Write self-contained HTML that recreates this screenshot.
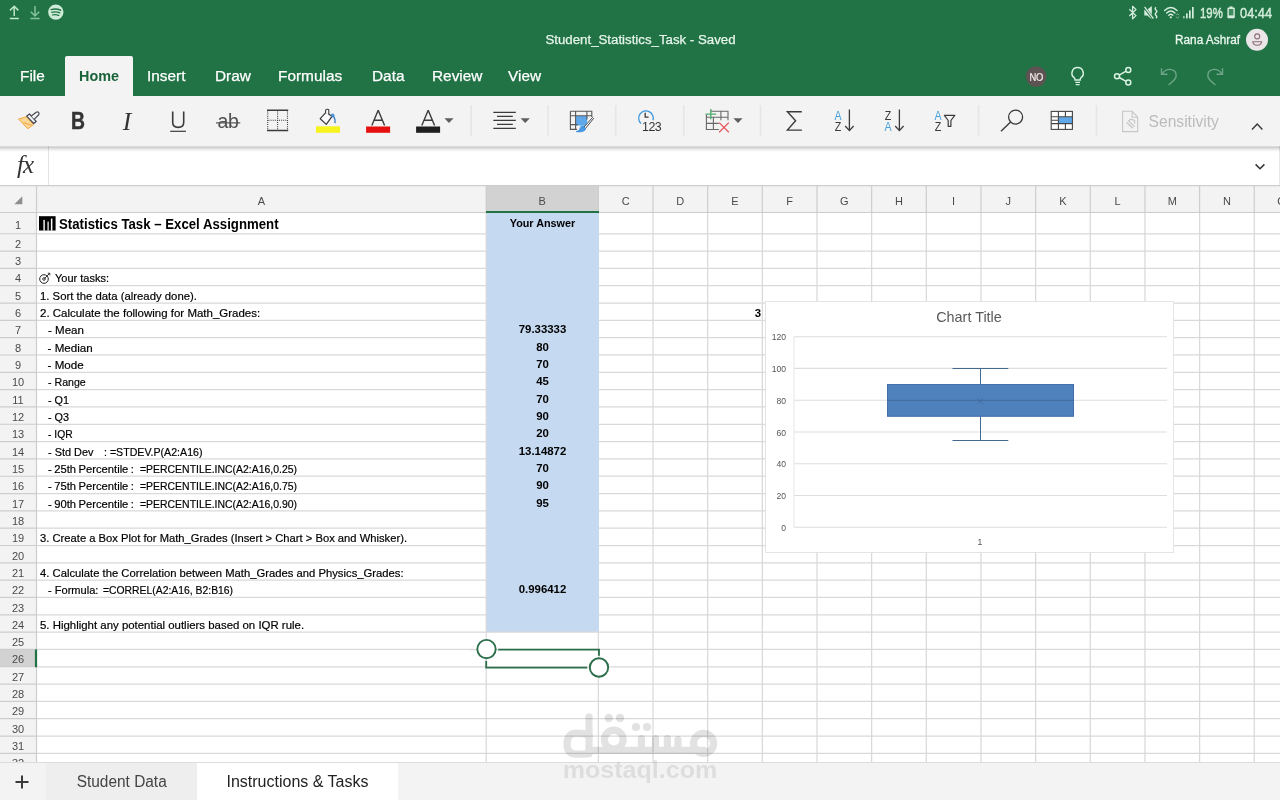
<!DOCTYPE html>
<html><head><meta charset="utf-8"><title>Student_Statistics_Task</title>
<style>
*{margin:0;padding:0;box-sizing:border-box}
html,body{width:1280px;height:800px;overflow:hidden;background:#fff;font-family:"Liberation Sans",sans-serif}
body{position:relative}
#root{position:absolute;left:0;top:0;width:1280px;height:800px;overflow:hidden;will-change:transform}
.abs{position:absolute}
#green{position:absolute;left:0;top:0;width:1280px;height:96px;background:#217346}
#hometab{position:absolute;left:65px;top:56px;width:68px;height:41px;background:#f3f3f3;border-radius:2px 2px 0 0}
.tab{position:absolute;top:66px;height:20px;line-height:20px;font-size:15.4px;color:#fff;white-space:nowrap;-webkit-text-stroke:.25px currentColor}
#toolbar{position:absolute;left:0;top:96px;width:1280px;height:50px;background:#f3f3f3;z-index:5}
#tbsh{position:absolute;left:0;top:145.500px;width:1280px;height:6.500px;z-index:6;background:linear-gradient(to bottom,rgba(0,0,0,0) 0,rgba(0,0,0,.23) 14%,rgba(0,0,0,.13) 40%,rgba(0,0,0,.04) 75%,rgba(0,0,0,0) 100%)}
.stx{top:3.300px;height:20px;line-height:20px;font-size:15px;color:#d3ecda;-webkit-text-stroke:.45px #d3ecda;transform-origin:0 50%;white-space:nowrap}
.tb{height:30px;line-height:30px;text-align:center;color:#333}
.az{width:10px;height:11px;line-height:11px;font-size:12.400px;color:#3b3b3b;text-align:center;transform:scaleX(.86)}
.sep{position:absolute;top:13px;width:1px;height:28px;background:#e1e1e1}
#fbar{position:absolute;left:0;top:146px;width:1280px;height:40px;background:#fff;border-bottom:1px solid #d0d0d0}
#fx{position:absolute;left:0;top:0;width:48.600px;height:39px;border-right:1.600px solid #e4e4e4;background:#fff}
#colhdrbg{position:absolute;left:0;top:186px;width:1280px;height:26.5px;background:#f3f3f3}
#rowhdrbg{position:absolute;left:0;top:186px;width:37px;height:576px;background:#f3f3f3}
#grid{position:absolute;left:0;top:0}
.ch{position:absolute;top:192.800px;height:16px;line-height:16px;text-align:center;font-size:11px;color:#4a4a4a}
.rh{position:absolute;left:0;width:36px;height:16px;line-height:16px;text-align:center;font-size:11px;color:#4a4a4a}
#bfill{position:absolute;background:#c5d9f1}
.ca{position:absolute;left:39.5px;height:16px;line-height:16px;font-size:11.6px;color:#000;white-space:nowrap;transform-origin:0 50%;transform:scaleX(.985);-webkit-text-stroke:.2px #000}
.cb{position:absolute;left:486px;width:113px;height:16px;line-height:16px;font-size:11.4px;font-weight:bold;color:#000;text-align:center;white-space:nowrap}
#r1t{left:59.300px;top:214.500px;height:18px;line-height:18px;font-size:14.400px;font-weight:bold;color:#000;white-space:nowrap;transform-origin:0 50%;transform:scaleX(.918)}
#b1t{left:486px;width:113px;top:215.200px;height:16px;line-height:16px;font-size:11.400px;font-weight:bold;text-align:center;color:#000;white-space:nowrap;transform:scaleX(.95)}
#e6t{left:740px;width:21px;top:305px;height:16px;line-height:16px;font-size:11.400px;font-weight:bold;text-align:right;color:#000}
.yl{left:756.100px;width:30px;height:12px;line-height:12px;font-size:8.600px;color:#555;text-align:right}
#bottom{position:absolute;left:0;top:762px;width:1280px;height:38px;background:#f3f3f3;border-top:1px solid #dcdcdc}
.stab{position:absolute;top:0;height:38px;line-height:37px;font-size:16px;text-align:center;color:#444}
</style></head><body><div id="root">

<div id="green"></div>
<div id="hometab"></div>
<!-- status bar left -->
<svg class="abs" style="left:0;top:0" width="80" height="26" viewBox="0 0 80 26" fill="none">
<g stroke="#bfe5cb" stroke-width="1.5"><path d="M14.2 6.2V16M10 10.4L14.2 6.2L18.4 10.4M9.8 18.6H18.8"/></g>
<g stroke="#86c29d" stroke-width="1.5"><path d="M35 6V16M30.8 11.8L35 16L39.2 11.8M30.4 18.6H39.6"/></g>
<circle cx="55.8" cy="12.1" r="7.700" fill="#cdebd6"/>
<g stroke="#217346" stroke-linecap="round"><path d="M51.2 9.6Q56 8 60.6 10.2" stroke-width="1.5"/><path d="M51.8 12.4Q56 11.1 59.8 12.9" stroke-width="1.3"/><path d="M52.4 15Q55.8 14 58.9 15.5" stroke-width="1.1"/></g>
</svg>
<!-- status bar right -->
<svg class="abs" style="left:1120px;top:0" width="160" height="26" viewBox="1120 0 160 26" fill="none">
<g stroke="#d6ecdc" stroke-width="1.3" stroke-linejoin="round"><path d="M1129.3 9.2L1136 15.6L1132.6 18.9V6.3L1136 9.6L1129.3 16"/></g>
<g fill="#d6ecdc"><path d="M1144.300 9.800H1147.200L1151.800 6V19.200L1147.200 15.400H1144.300Z"/></g>
<path d="M1144 6.500L1153 18.500" stroke="#217346" stroke-width="2.600"/><path d="M1144.600 6.800L1153.400 18.600" stroke="#d6ecdc" stroke-width="1.300"/>
<path d="M1156 7.300q-1.600 1.300 0 2.700t0 2.700t0 2.700t0 2.700" stroke="#d6ecdc" stroke-width="1.400"/>
<g stroke="#d6ecdc" stroke-width="1.4" stroke-linecap="round"><path d="M1164.6 10.6Q1170.8 4.6 1177 10.6"/><path d="M1166.7 13Q1170.8 9 1174.9 13"/><path d="M1168.8 15.3Q1170.8 13.4 1172.8 15.3"/></g><circle cx="1170.8" cy="17.3" r="1.1" fill="#d6ecdc"/>
<path d="M1176.2 15.2l1.4-1.6l1.4 1.6M1176.2 16.6l1.4 1.6l1.4-1.6" stroke="#9cc3ad" stroke-width=".8"/>
<g fill="#d6ecdc"><rect x="1183" y="16" width="1.7" height="2.4" fill="#9cc3ad"/><rect x="1186" y="13.4" width="1.7" height="5"/><rect x="1189" y="10.4" width="1.7" height="8"/><rect x="1192" y="7" width="1.7" height="11.4"/></g>
<g fill="#d6ecdc"><rect x="1229.6" y="6.4" width="3" height="1.6"/><rect x="1227.4" y="7.6" width="7.4" height="10.6" rx="1"/></g><rect x="1228.8" y="9" width="4.6" height="6.4" fill="#3d8a5e"/>
</svg>
<div class="abs stx" style="left:1199.5px;width:40px;transform:scaleX(.76)">19%</div>
<div class="abs stx" style="left:1239.5px;width:50px;transform:scaleX(.855)">04:44</div>
<!-- tabs -->
<div class="tab" style="left:20px">File</div>
<div class="tab" style="left:78.8px;color:#1a6339;font-weight:bold;-webkit-text-stroke:0;transform-origin:0 50%;transform:scaleX(.935)">Home</div>
<div class="tab" style="left:147px">Insert</div>
<div class="tab" style="left:215px">Draw</div>
<div class="tab" style="left:278px">Formulas</div>
<div class="tab" style="left:372px">Data</div>
<div class="tab" style="left:432px">Review</div>
<div class="tab" style="left:508px">View</div>
<div class="abs" style="left:440.500px;width:400px;top:30.900px;height:18px;line-height:18px;text-align:center;color:#e8f6ec;font-size:13.250px;-webkit-text-stroke:.25px #e8f6ec">Student_Statistics_Task - Saved</div>
<div class="abs" style="left:1100px;width:140px;top:30.5px;height:18px;line-height:18px;text-align:right;color:#eaf7ee;font-size:12.500px;transform-origin:100% 50%;transform:scaleX(.945);-webkit-text-stroke:.3px #eaf7ee">Rana Ashraf</div>
<!-- avatar + right icons -->
<svg class="abs" style="left:1010px;top:24px" width="270" height="72" viewBox="1010 24 270 72" fill="none">
<circle cx="1257" cy="39.8" r="11" fill="#ebe6e8"/>
<g stroke="#8d6b78" stroke-width="1.100"><circle cx="1257.200" cy="36.400" r="2.500"/><path d="M1252.800 41.800H1261.600Q1261.200 45.200 1257.200 45.200T1252.800 41.800Z"/></g>
<circle cx="1036.1" cy="76.6" r="10.3" fill="#5d5353"/>
<g stroke="#d9f3e1" stroke-width="1.5"><path d="M1077.6 67.6a5.6 5.6 0 0 1 3.4 10.1q-.9.8-.9 2.4h-5q0-1.600-.9-2.400a5.600 5.600 0 0 1 3.400-10.100Z"/><path d="M1075.300 82.400H1080M1075.700 84.700H1079.600" stroke-width="1.200"/></g>
<g stroke="#d9f3e1" stroke-width="1.5"><circle cx="1128.300" cy="70" r="2.500"/><circle cx="1117" cy="76.300" r="2.500"/><circle cx="1128.300" cy="82.600" r="2.500"/><path d="M1119.200 75.100L1126.100 71.200M1119.200 77.500L1126.100 81.400"/></g>
<g stroke="#6fa688" stroke-width="1.400"><path d="M1161.500 68.300V74.300H1167.500"/><path d="M1161.800 74.100Q1166 68.300 1171.500 69.600T1176 77Q1174.500 80.500 1168.500 85"/></g>
<g stroke="#6fa688" stroke-width="1.400"><path d="M1222.500 68.300V74.300H1216.500"/><path d="M1222.200 74.100Q1218 68.300 1212.500 69.600T1208 77Q1209.500 80.500 1215.500 85"/></g>
</svg>
<div class="abs" style="left:1026px;top:70px;width:20.4px;height:14px;line-height:14px;text-align:center;color:#f6ecee;font-size:11.200px;letter-spacing:-.4px;transform:scaleX(.84);-webkit-text-stroke:.2px #f6ecee">NO</div>

<div id="toolbar">
<svg class="abs" style="left:0;top:0" width="1280" height="50" viewBox="0 96 1280 50" fill="none">
<!-- separators -->
<g stroke="#e6e6e6" stroke-width="1.600"><path d="M471.200 105V136M548 105V136M615.700 105V136M683.800 105V136M760.500 105V136M978.600 105V136M1096.400 105V136"/></g>
<!-- format painter -->
<path d="M18.500 119.100L26.400 116.800L33.400 124.600L27.900 128.800Z" fill="#fbd796" stroke="#f0a643" stroke-width="1" stroke-linejoin="round"/>
<path d="M23.400 122.600L31.800 125.300" stroke="#eda03c" stroke-width=".9"/>
<path d="M26.700 116.100L29.500 114L36.200 121.500L33.700 123.500Z" fill="#f5f5f5" stroke="#474a55" stroke-width="1.200" stroke-linejoin="round"/>
<path d="M31.300 115.900L36.200 112.200Q37.800 111.300 38.700 112.500T38.500 115L34.300 119.200" fill="#f5f5f5" stroke="#474a55" stroke-width="1.200" stroke-linejoin="round"/>
<!-- U -->
<path d="M172.700 111.600V122.300Q172.700 127.400 178.200 127.400T183.700 122.300V111.600" stroke="#3b3b3b" stroke-width="1.600"/>
<path d="M170.200 131.300H186" stroke="#3b3b3b" stroke-width="1.200"/>
<!-- strikethrough line -->
<path d="M216 122.900H240.300" stroke="#444" stroke-width="1.100"/>
<!-- borders -->
<path d="M267 110.200H288.200M267 130.400H288.200" stroke="#3b3b3b" stroke-width="1.500"/>
<path d="M267.700 111.500V129.500M287.500 111.500V129.500M277.600 111.500V129.500M268.500 120.300H287" stroke="#3b3b3b" stroke-width="1.100" stroke-dasharray="1 1.100"/>
<!-- fill bucket -->
<rect x="316" y="126.300" width="24" height="6.500" fill="#f6f31e"/>
<path d="M320.200 118.700L326.200 112.200L332 116.400L326.300 124.400Z" fill="#fafafa" stroke="#3b3b3b" stroke-width="1.200" stroke-linejoin="round"/>
<path d="M325.600 113.400V110.400Q325.600 109.200 327.200 109.200T328.800 110.400V114.200" fill="#fafafa" stroke="#3b3b3b" stroke-width="1.100"/>
<circle cx="332.600" cy="115.400" r="1.500" fill="#5b9bd8" stroke="#2f78c4" stroke-width=".8"/>
<path d="M333.600 116.400Q335.600 119 335 123.200" stroke="#2f78c4" stroke-width="1.400"/>
<!-- font color A red -->
<rect x="366.100" y="126.500" width="24" height="6.300" fill="#e61010"/>
<path d="M371.800 125.600L378.200 110.200L384.600 125.600M374.200 120.200H382.200" stroke="#3b3b3b" stroke-width="1.400" stroke-linejoin="bevel"/>
<!-- font A black -->
<rect x="416.100" y="126.500" width="24" height="6.300" fill="#1f1f1f"/>
<path d="M421.800 125.600L428.200 110.200L434.600 125.600M424.200 120.200H432.200" stroke="#3b3b3b" stroke-width="1.400" stroke-linejoin="bevel"/>
<path d="M444.400 118.200H453.600L449 123Z" fill="#5e5e5e"/>
<!-- align -->
<g stroke="#3b3b3b" stroke-width="1.200"><path d="M493.300 112.300H515.800M497 116.300H512.800M493.300 120.300H515.800M497 124.300H512.800M493.300 128.300H515.800"/></g>
<path d="M520.600 118.200H529.800L525.200 123Z" fill="#5e5e5e"/>
<!-- table style w/ brush -->
<rect x="576" y="116" width="11.200" height="9.600" fill="#5fa9ea"/>
<path d="M581 125.600H586.500L583.500 129.500H579Z" fill="#5fa9ea"/>
<g stroke="#585858" stroke-width="1.100"><path d="M570.400 111.200H591.800V117M570.400 111.200V129.400H577M575.600 111.200V129.400M586.900 111.200V119.500M570.400 115.700H591.800M570.400 124.600H577.500"/></g>
<path d="M592.500 117.500L593.500 118.500L585.300 128.700L583.700 127.400Z" fill="#fafafa" stroke="#474a55" stroke-width="1" stroke-linejoin="round"/>
<path d="M585.800 128.500Q585 132.800 576 131.700Q579.800 130.600 580.400 128.600T583.900 126.900Z" fill="#4a9be6" stroke="#3587d6" stroke-width=".6"/>
<!-- clock 123 -->
<path d="M641 123.500A7.300 7.300 0 1 1 653 120.200" stroke="#3a96dd" stroke-width="1.300"/>
<path d="M645.200 112.800V117.200H648.600" stroke="#3b3b3b" stroke-width="1.300"/>
<!-- insert/delete cells -->
<g stroke="#686868" stroke-width="1.100"><path d="M711 111.300H728V120.300M706.400 114.500V129.500H718.800M706.400 117.300H728M706.400 123.400H718.800M713.400 117.300V129.500M720.900 111.300V120.300"/></g>
<path d="M710.800 108.900V119.200M705.500 114.100H716.200" stroke="#4fae6c" stroke-width="1.400"/>
<path d="M719.200 122.600L728.800 132.200M728.800 122.600L719.200 132.200" stroke="#e5565b" stroke-width="1.300"/>
<path d="M733.400 118.200H742.600L738 123Z" fill="#5e5e5e"/>
<!-- sigma -->
<path d="M801.800 111.700H787.400L795.600 120.800L787.400 130.100H801.900" stroke="#3b3b3b" stroke-width="1.400" stroke-linejoin="miter"/>
<!-- sort arrows -->
<path d="M849.400 109.600V130.800M845.200 126L849.400 130.600L853.600 126" stroke="#3b3b3b" stroke-width="1.300"/>
<path d="M899.400 109.600V130.800M895.200 126L899.400 130.600L903.600 126" stroke="#3b3b3b" stroke-width="1.300"/>
<!-- filter funnel -->
<path d="M944.400 115.300H954.800L950.900 120.500V126.300H948.200V120.500Z" stroke="#3b3b3b" stroke-width="1.200" stroke-linejoin="round"/>
<!-- search -->
<circle cx="1015.600" cy="117.100" r="7" stroke="#3b3b3b" stroke-width="1.300"/><path d="M1010.600 122.100L1001 131.300" stroke="#3b3b3b" stroke-width="1.400"/>
<!-- table -->
<rect x="1051.200" y="111.400" width="21.200" height="18" fill="#fff"/>
<rect x="1058.400" y="117" width="14" height="6.600" fill="#5fa9ea"/>
<g stroke="#444" stroke-width="1.100"><rect x="1051.200" y="111.400" width="21.200" height="18"/><path d="M1051.200 116.800H1072.400M1051.200 123.600H1072.400M1058.400 111.400V129.400M1065.400 111.400V116.800M1065.400 123.600V129.400M1051.200 120.200H1058.400"/></g>
<!-- sensitivity -->
<g stroke="#c6c6c6" stroke-width="1.100"><path d="M1122.600 111.300H1132.200L1137.700 117.200V131.600H1122.600Z"/><path d="M1132.200 111.300V117.200H1137.700"/><path d="M1126.600 122.400L1133 128.200M1128.400 120.600L1134.600 126.600" stroke-width="1.300"/><path d="M1128.500 120.800L1130.800 119.200L1134.600 120.400L1134.600 123.800" /></g>
<!-- chevron up -->
<path d="M1252 129.400L1257.200 124L1262.400 129.400" stroke="#3b3b3b" stroke-width="1.500"/>
</svg>
<div class="abs tb" style="left:62px;top:10px;width:32px;font-weight:bold;font-size:23px;transform:scaleX(.84);-webkit-text-stroke:.45px #333">B</div>
<div class="abs tb" style="left:111px;top:10.500px;width:32px;font-family:'Liberation Serif',serif;font-style:italic;font-size:25.500px">I</div>
<div class="abs tb" style="left:208px;top:10px;width:40px;font-size:19.500px;letter-spacing:-.4px;color:#505050">ab</div>
<div class="abs tb" style="left:636px;top:22.500px;width:32px;font-size:12.400px;letter-spacing:-.5px;line-height:16px;height:16px;text-align:left;padding-left:6px">123</div>
<div class="abs az" style="left:832.800px;top:15px;color:#48a1de">A</div><div class="abs az" style="left:832.800px;top:25.900px">Z</div>
<div class="abs az" style="left:882.800px;top:15px">Z</div><div class="abs az" style="left:882.800px;top:25.900px;color:#48a1de">A</div>
<div class="abs az" style="left:932.600px;top:15px;color:#48a1de">A</div><div class="abs az" style="left:932.600px;top:25.900px">Z</div>
<div class="abs" style="left:1148.600px;top:16.300px;height:20px;line-height:20px;font-size:15.600px;color:#bcbcbc;white-space:nowrap">Sensitivity</div>
</div>
<div id="tbsh"></div>
<div id="fbar"><div id="fx"></div><div class="abs" style="left:1278.500px;top:0;width:1.500px;height:39px;background:#e6e6e6"></div>
<div class="abs" style="left:10px;top:4px;width:30px;height:30px;line-height:30px;text-align:center;font-family:'Liberation Serif',serif;font-style:italic;font-size:25px;color:#333;letter-spacing:-1px">fx</div>
<svg class="abs" style="left:1250px;top:14px" width="20" height="14" viewBox="0 0 20 14" fill="none"><path d="M5.600 4.400L10 8.800L14.400 4.400" stroke="#333" stroke-width="1.500"/></svg>
</div>

<div id="colhdrbg"></div><div id="rowhdrbg"></div>
<div class="abs" style="left:486px;top:186px;width:113px;height:25px;background:#d2d2d2"></div>
<div class="abs" style="left:0;top:649.43px;width:36px;height:17.32px;background:#d2d2d2"></div>
<div id="bfill" style="left:486.1px;top:213px;width:112.6px;height:418.61px"></div>
<svg id="grid" width="1280" height="762" viewBox="0 0 1280 762">
<g stroke="#d9d9d9" stroke-width="1.25">
<path d="M37 233.75H486.4M599 233.75H1280"/>
<path d="M37 251.07H486.4M599 251.07H1280"/>
<path d="M37 268.39H486.4M599 268.39H1280"/>
<path d="M37 285.71H486.4M599 285.71H1280"/>
<path d="M37 303.03H486.4M599 303.03H1280"/>
<path d="M37 320.35H486.4M599 320.35H1280"/>
<path d="M37 337.67H486.4M599 337.67H1280"/>
<path d="M37 354.99H486.4M599 354.99H1280"/>
<path d="M37 372.31H486.4M599 372.31H1280"/>
<path d="M37 389.63H486.4M599 389.63H1280"/>
<path d="M37 406.95H486.4M599 406.95H1280"/>
<path d="M37 424.27H486.4M599 424.27H1280"/>
<path d="M37 441.59H486.4M599 441.59H1280"/>
<path d="M37 458.91H486.4M599 458.91H1280"/>
<path d="M37 476.23H486.4M599 476.23H1280"/>
<path d="M37 493.55H486.4M599 493.55H1280"/>
<path d="M37 510.87H486.4M599 510.87H1280"/>
<path d="M37 528.19H486.4M599 528.19H1280"/>
<path d="M37 545.51H486.4M599 545.51H1280"/>
<path d="M37 562.83H486.4M599 562.83H1280"/>
<path d="M37 580.15H486.4M599 580.15H1280"/>
<path d="M37 597.47H486.4M599 597.47H1280"/>
<path d="M37 614.79H486.4M599 614.79H1280"/>
<path d="M37 632.11H1280"/>
<path d="M37 649.43H1280"/>
<path d="M37 666.75H1280"/>
<path d="M37 684.07H1280"/>
<path d="M37 701.39H1280"/>
<path d="M37 718.71H1280"/>
<path d="M37 736.03H1280"/>
<path d="M37 753.35H1280"/>
<path d="M486.20 212V762"/>
<path d="M598.35 632.11V762"/>
<path d="M653.01 212V762"/>
<path d="M707.67 212V762"/>
<path d="M762.33 212V762"/>
<path d="M816.99 212V762"/>
<path d="M871.65 212V762"/>
<path d="M926.31 212V762"/>
<path d="M980.97 212V762"/>
<path d="M1035.63 212V762"/>
<path d="M1090.29 212V762"/>
<path d="M1144.95 212V762"/>
<path d="M1199.61 212V762"/>
<path d="M1254.27 212V762"/>
</g>
<g stroke="#cdcdcd" stroke-width="1.2">
<path d="M0 185.6H1280"/>
<path d="M0 212.5H486M599 212.5H1280"/>
<path d="M486.20 186V212"/>
<path d="M598.35 186V212"/>
<path d="M653.01 186V212"/>
<path d="M707.67 186V212"/>
<path d="M762.33 186V212"/>
<path d="M816.99 186V212"/>
<path d="M871.65 186V212"/>
<path d="M926.31 186V212"/>
<path d="M980.97 186V212"/>
<path d="M1035.63 186V212"/>
<path d="M1090.29 186V212"/>
<path d="M1144.95 186V212"/>
<path d="M1199.61 186V212"/>
<path d="M1254.27 186V212"/>
<path d="M36.5 186V762"/>
<path d="M0 233.75H37"/>
<path d="M0 251.07H37"/>
<path d="M0 268.39H37"/>
<path d="M0 285.71H37"/>
<path d="M0 303.03H37"/>
<path d="M0 320.35H37"/>
<path d="M0 337.67H37"/>
<path d="M0 354.99H37"/>
<path d="M0 372.31H37"/>
<path d="M0 389.63H37"/>
<path d="M0 406.95H37"/>
<path d="M0 424.27H37"/>
<path d="M0 441.59H37"/>
<path d="M0 458.91H37"/>
<path d="M0 476.23H37"/>
<path d="M0 493.55H37"/>
<path d="M0 510.87H37"/>
<path d="M0 528.19H37"/>
<path d="M0 545.51H37"/>
<path d="M0 562.83H37"/>
<path d="M0 580.15H37"/>
<path d="M0 597.47H37"/>
<path d="M0 614.79H37"/>
<path d="M0 632.11H37"/>
<path d="M0 649.43H37"/>
<path d="M0 666.75H37"/>
<path d="M0 684.07H37"/>
<path d="M0 701.39H37"/>
<path d="M0 718.71H37"/>
<path d="M0 736.03H37"/>
<path d="M0 753.35H37"/>
</g>
<path d="M486 212H599" stroke="#217346" stroke-width="2"/>
<path d="M36 649.43V667.25" stroke="#217346" stroke-width="2.2"/>
<path d="M14.300 204.200L22.300 196.200V204.200Z" fill="#8e8e8e"/>
</svg>
<div class="ch" style="left:36.60px;width:449.60px">A</div>
<div class="ch" style="left:486.20px;width:112.15px">B</div>
<div class="ch" style="left:598.35px;width:54.66px">C</div>
<div class="ch" style="left:653.01px;width:54.66px">D</div>
<div class="ch" style="left:707.67px;width:54.66px">E</div>
<div class="ch" style="left:762.33px;width:54.66px">F</div>
<div class="ch" style="left:816.99px;width:54.66px">G</div>
<div class="ch" style="left:871.65px;width:54.66px">H</div>
<div class="ch" style="left:926.31px;width:54.66px">I</div>
<div class="ch" style="left:980.97px;width:54.66px">J</div>
<div class="ch" style="left:1035.63px;width:54.66px">K</div>
<div class="ch" style="left:1090.29px;width:54.66px">L</div>
<div class="ch" style="left:1144.95px;width:54.66px">M</div>
<div class="ch" style="left:1199.61px;width:54.66px">N</div>
<div class="ch" style="left:1254.27px;width:54.66px">O</div>
<div class="rh" style="top:216.53px">1</div>
<div class="rh" style="top:235.81px">2</div>
<div class="rh" style="top:253.13px">3</div>
<div class="rh" style="top:270.45px">4</div>
<div class="rh" style="top:287.77px">5</div>
<div class="rh" style="top:305.09px">6</div>
<div class="rh" style="top:322.41px">7</div>
<div class="rh" style="top:339.73px">8</div>
<div class="rh" style="top:357.05px">9</div>
<div class="rh" style="top:374.37px">10</div>
<div class="rh" style="top:391.69px">11</div>
<div class="rh" style="top:409.01px">12</div>
<div class="rh" style="top:426.33px">13</div>
<div class="rh" style="top:443.65px">14</div>
<div class="rh" style="top:460.97px">15</div>
<div class="rh" style="top:478.29px">16</div>
<div class="rh" style="top:495.61px">17</div>
<div class="rh" style="top:512.93px">18</div>
<div class="rh" style="top:530.25px">19</div>
<div class="rh" style="top:547.57px">20</div>
<div class="rh" style="top:564.89px">21</div>
<div class="rh" style="top:582.21px">22</div>
<div class="rh" style="top:599.53px">23</div>
<div class="rh" style="top:616.85px">24</div>
<div class="rh" style="top:634.17px">25</div>
<div class="rh" style="top:651.49px">26</div>
<div class="rh" style="top:668.81px">27</div>
<div class="rh" style="top:686.13px">28</div>
<div class="rh" style="top:703.45px">29</div>
<div class="rh" style="top:720.77px">30</div>
<div class="rh" style="top:738.09px">31</div>
<div class="rh" style="top:755.41px">32</div>
<div class="ca" style="top:287.67px;transform:scaleX(0.978)">1. Sort the data (already done).</div>
<div class="ca" style="top:304.99px;transform:scaleX(0.99)">2. Calculate the following for Math_Grades:</div>
<div class="ca" style="top:322.31px;left:47.6px;transform:scaleX(0.995)">- Mean</div>
<div class="ca" style="top:339.63px;left:47.6px;transform:scaleX(1.0)">- Median</div>
<div class="ca" style="top:356.95px;left:47.6px;transform:scaleX(1.0)">- Mode</div>
<div class="ca" style="top:374.27px;left:47.6px;transform:scaleX(0.914)">- Range</div>
<div class="ca" style="top:391.59px;left:47.6px;transform:scaleX(0.935)">- Q1</div>
<div class="ca" style="top:408.91px;left:47.6px;transform:scaleX(0.935)">- Q3</div>
<div class="ca" style="top:426.23px;left:47.6px;transform:scaleX(0.888)">- IQR</div>
<div class="ca" style="top:443.55px;left:47.6px;transform:scaleX(0.94)">- Std Dev</div>
<div class="ca" style="top:443.55px;left:104.0px;transform:scaleX(0.916)">: =STDEV.P(A2:A16)</div>
<div class="ca" style="top:460.87px;left:47.6px;transform:scaleX(0.968)"><span style="word-spacing:-.7px">- 25th Percentile :</span></div>
<div class="ca" style="top:460.87px;left:140.3px;transform:scaleX(0.901)">=PERCENTILE.INC(A2:A16,0.25)</div>
<div class="ca" style="top:478.19px;left:47.6px;transform:scaleX(0.968)"><span style="word-spacing:-.7px">- 75th Percentile :</span></div>
<div class="ca" style="top:478.19px;left:140.3px;transform:scaleX(0.901)">=PERCENTILE.INC(A2:A16,0.75)</div>
<div class="ca" style="top:495.51px;left:47.6px;transform:scaleX(0.968)"><span style="word-spacing:-.7px">- 90th Percentile :</span></div>
<div class="ca" style="top:495.51px;left:140.3px;transform:scaleX(0.901)">=PERCENTILE.INC(A2:A16,0.90)</div>
<div class="ca" style="top:530.15px;transform:scaleX(0.967)">3. Create a Box Plot for Math_Grades (Insert &gt; Chart &gt; Box and Whisker).</div>
<div class="ca" style="top:564.79px;transform:scaleX(0.971)">4. Calculate the Correlation between Math_Grades and Physics_Grades:</div>
<div class="ca" style="top:582.11px;left:47.6px;transform:scaleX(0.954)">- Formula:</div>
<div class="ca" style="top:582.11px;left:102.9px;transform:scaleX(0.895)">=CORREL(A2:A16, B2:B16)</div>
<div class="ca" style="top:616.75px;transform:scaleX(0.985)">5. Highlight any potential outliers based on IQR rule.</div>
<div class="cb" style="top:321.41px">79.33333</div>
<div class="cb" style="top:338.73px">80</div>
<div class="cb" style="top:356.05px">70</div>
<div class="cb" style="top:373.37px">45</div>
<div class="cb" style="top:390.69px">70</div>
<div class="cb" style="top:408.01px">90</div>
<div class="cb" style="top:425.33px">20</div>
<div class="cb" style="top:442.65px">13.14872</div>
<div class="cb" style="top:459.97px">70</div>
<div class="cb" style="top:477.29px">90</div>
<div class="cb" style="top:494.61px">95</div>
<div class="cb" style="top:581.21px">0.996412</div>
<!-- row1 title -->
<svg class="abs" style="left:38px;top:214px" width="20" height="18" viewBox="38 214 20 18"><rect x="39" y="216.200" width="16.600" height="14.300" fill="#000"/><g fill="#fff"><rect x="43.400" y="219.900" width="1.400" height="10.700"/><rect x="47.500" y="221.600" width="1.200" height="9"/><rect x="50.900" y="218.600" width="1.500" height="12"/></g></svg>
<div class="abs" id="r1t">Statistics Task – Excel Assignment</div>
<div class="abs" id="b1t">Your Answer</div>
<!-- row4 -->
<svg class="abs" style="left:38px;top:270px" width="16" height="16" viewBox="38 270 16 16" fill="none" stroke="#222"><circle cx="44" cy="279" r="4.300" stroke-width="1"/><circle cx="44" cy="279" r="1.300" stroke-width=".9"/><path d="M44.300 278.700L49.600 273.400M47.800 273.200L49.800 273.300L49.900 275.300" stroke-width=".9"/></svg>
<div class="ca" id="r4t" style="left:55.300px;transform:scaleX(.948);top:270.35px">Your tasks:</div>
<div class="abs" id="e6t">3</div>

<div class="abs" style="left:764.700px;top:301px;width:409.600px;height:251.600px;background:#fff;border:1px solid #e4e4e4"></div>
<svg class="abs" style="left:764px;top:300px" width="412" height="254" viewBox="764 300 412 254" fill="none">
<path d="M794 336.700V527.200" stroke="#e6e6e6" stroke-width="1"/><g stroke="#dedede" stroke-width="1.100"><path d="M794 336.700H1167M794 368.400H1167M794 400.200H1167M794 432H1167M794 463.700H1167M794 495.500H1167M794 527.200H1167"/></g>
<g stroke="#44698f" stroke-width="1"><path d="M980.500 368.500V384.300M980.500 416.100V440.500M952.500 368.500H1008.300M952.500 440.500H1008.300"/></g>
<rect x="887.500" y="384.500" width="186" height="31.800" fill="#4f81bd" stroke="#446fa8" stroke-width="1"/>
<path d="M887.500 400.400H1073.500" stroke="#446b9e" stroke-width="1"/>
<path d="M977.800 398.400L983 403.600M983 398.400L977.800 403.600" stroke="#3f6b9e" stroke-width="1"/>
</svg>
<div class="abs" style="left:869px;top:307px;width:200px;height:20px;line-height:20px;text-align:center;font-size:14.200px;color:#595959;transform:scaleX(1.016)">Chart Title</div>
<div class="abs yl" style="top:331.200px">120</div>
<div class="abs yl" style="top:362.900px">100</div>
<div class="abs yl" style="top:394.700px">80</div>
<div class="abs yl" style="top:426.500px">60</div>
<div class="abs yl" style="top:458.200px">40</div>
<div class="abs yl" style="top:490px">20</div>
<div class="abs yl" style="top:521.700px">0</div>
<div class="abs yl" style="top:536.300px;left:970px;width:20px;text-align:center">1</div>

<!-- selection -->
<svg class="abs" style="left:470px;top:634px" width="150" height="50" viewBox="470 634 150 50" fill="none">
<path d="M486.200 649.600H599V667.600H486.200Z" stroke="#2b6e4a" stroke-width="1.800"/>
<circle cx="486.500" cy="649.100" r="11.700" fill="#fff"/><circle cx="599" cy="667.500" r="11.700" fill="#fff"/>
<path d="M470 649.500H486M487 649.500H498" stroke="#d7d7d7" stroke-width="1.250"/>
<path d="M588 667H610" stroke="#d7d7d7" stroke-width="1.250"/><path d="M598.900 656V679" stroke="#d7d7d7" stroke-width="1.250"/><path d="M486.200 638V661" stroke="#d7d7d7" stroke-width="1.250"/>
<circle cx="486.500" cy="649.100" r="9.200" fill="#fff" stroke="#2b6e4a" stroke-width="1.900"/>
<circle cx="599" cy="667.500" r="9.200" fill="#fff" stroke="#2b6e4a" stroke-width="1.900"/>
</svg>
<!-- watermark -->
<svg class="abs" style="left:555px;top:705px;z-index:9" width="170" height="95" viewBox="555 705 170 95" fill="none">
<g opacity=".115">
<g stroke="#000" stroke-width="7.200" stroke-linecap="round" stroke-linejoin="round">
<path d="M589 716.800V750.200"/>
<path d="M589 753.600Q586 754.200 576.500 754.200Q567 754.200 567 743.500T577.500 733.200Q585 733.200 589 736"/>
<path d="M589 750.400H704"/>
<circle cx="613.800" cy="739.600" r="9.400"/>
<path d="M641.400 750V738.500M655.500 750V738.500M667.400 750V738.500M678 750V739.500"/>
<circle cx="703.600" cy="743.400" r="10"/>
</g>
<g fill="#000"><circle cx="608.800" cy="718" r="4.200"/><circle cx="620" cy="718" r="4.200"/><circle cx="636" cy="727" r="4.100"/><circle cx="647" cy="727" r="4.100"/></g>
</g>
<text x="640" y="778" font-family="Liberation Sans, sans-serif" font-size="23" font-weight="bold" text-anchor="middle" fill="#000" opacity=".085" textLength="154.500" lengthAdjust="spacingAndGlyphs">mostaql.com</text>
</svg>

<div id="bottom">
<div class="stab" style="left:46px;width:151px;background:#eeeeee"><span style="display:inline-block;transform:scaleX(.964)">Student Data</span></div>
<div class="stab" style="left:197px;width:201px;background:#fff;color:#222">Instructions &amp; Tasks</div>
<svg class="abs" style="left:10px;top:7px" width="24" height="24" viewBox="0 0 24 24"><path d="M12 5.500V18.500M5.500 12H18.500" stroke="#3b3b3b" stroke-width="2"/></svg>
</div>

</div></body></html>
